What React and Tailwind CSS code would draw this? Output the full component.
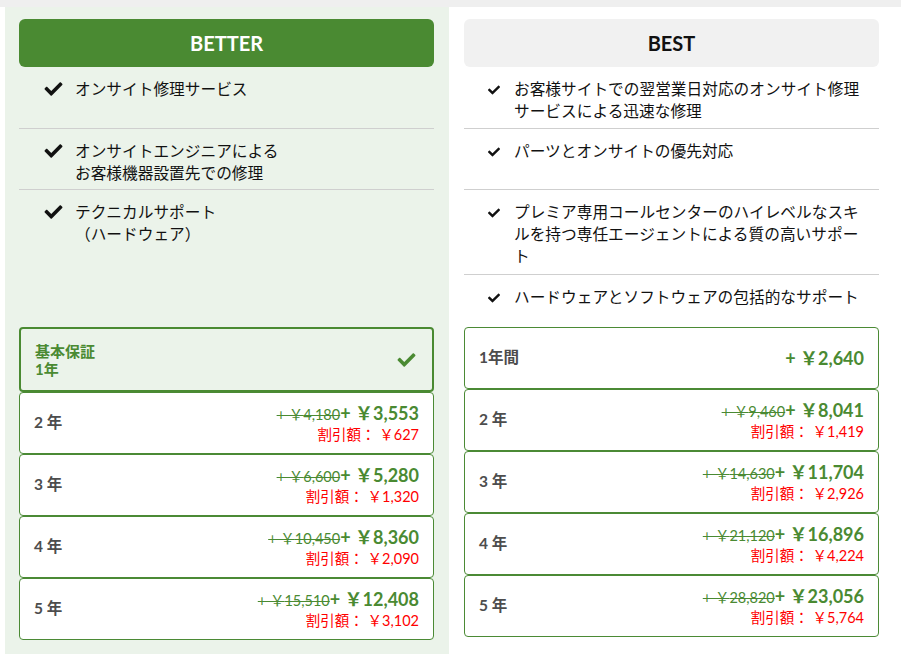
import { FaCheck } from 'react-icons/fa';

const font = { fontFamily: 'Lato, "Noto Sans CJK JP", sans-serif' };

const rowHeights = ['h-[62px]', 'h-[61px]', 'h-[85px]', 'h-[52px]'];

const betterFeatures = [
  ['オンサイト修理サービス'],
  ['オンサイトエンジニアによる', 'お客様機器設置先での修理'],
  ['テクニカルサポート', '（ハードウェア）'],
];

const bestFeatures = [
  ['お客様サイトでの翌営業日対応のオンサイト修理サービスによる迅速な修理'],
  ['パーツとオンサイトの優先対応'],
  ['プレミア専用コールセンターのハイレベルなスキルを持つ専任エージェントによる質の高いサポート'],
  ['ハードウェアとソフトウェアの包括的なサポート'],
];

const betterPrices = [
  { label: '2 年', was: '4,180', now: '3,553', off: '627' },
  { label: '3 年', was: '6,600', now: '5,280', off: '1,320' },
  { label: '4 年', was: '10,450', now: '8,360', off: '2,090' },
  { label: '5 年', was: '15,510', now: '12,408', off: '3,102' },
];

const bestPrices = [
  { label: '2 年', was: '9,460', now: '8,041', off: '1,419' },
  { label: '3 年', was: '14,630', now: '11,704', off: '2,926' },
  { label: '4 年', was: '21,120', now: '16,896', off: '4,224' },
  { label: '5 年', was: '28,820', now: '23,056', off: '5,764' },
];

function PriceRow({ row }) {
  return (
    <div className="h-[62px] bg-white border border-[#4b8a35] rounded-[4px] px-[14px] flex items-center justify-between">
      <span className="text-[15.5px] font-bold text-[#4d4d4d]">{row.label}</span>
      <div className="flex flex-col items-end">
        <div className="flex items-baseline text-[#4a8a32] leading-[21px]">
          <span className="text-[14.5px] line-through">+ ￥{row.was}</span>
          <span className="text-[18px] font-bold">+ ￥{row.now}</span>
        </div>
        <div className="text-[14.5px] text-[#ff0000] leading-[19px]">割引額： ￥{row.off}</div>
      </div>
    </div>
  );
}

export default function App() {
  return (
    <div className="min-h-screen bg-white" style={font}>
      <div className="h-[7px] bg-[#efefef]" />
      <div className="flex pl-[5px]">
        {/* BETTER */}
        <div className="w-[444px] bg-[#ebf3ea] pl-[14px] pr-[15px] pt-[12px] pb-[14px]">
          <div className="h-[48px] rounded-[6px] bg-[#4a8a32] flex items-center justify-center text-white text-[20px] font-bold">
            BETTER
          </div>
          <div className="h-[260px]">
            {betterFeatures.map((lines, i) => (
              <div
                key={i}
                className={`${rowHeights[i]} ${i < 2 ? 'border-b border-[#cfcfcf]' : ''} pt-[11px] flex`}
              >
                <FaCheck className="ml-[24px] mt-[2px] w-[21px] h-[18px] text-[#111]" />
                <div className="ml-[11px] text-[15.7px] leading-[22px] text-[#111]">
                  {lines.map((l) => (
                    <div key={l}>{l}</div>
                  ))}
                </div>
              </div>
            ))}
          </div>
          <div className="flex flex-col">
            <div className="h-[65px] border-2 border-[#4a8a32] rounded-[4px] px-[14px] flex items-center justify-between text-[#4a8a32]">
              <div className="text-[15px] font-bold leading-[18px]">
                <div>基本保証</div>
                <div>1年</div>
              </div>
              <FaCheck className="w-[21px] h-[18px] mr-[1px]" />
            </div>
            {betterPrices.map((row) => (
              <PriceRow key={row.label} row={row} />
            ))}
          </div>
        </div>

        {/* BEST */}
        <div className="w-[444px] bg-white pl-[15px] pr-[14px] pt-[12px]">
          <div className="h-[48px] rounded-[6px] bg-[#f1f1f1] flex items-center justify-center text-[#111] text-[20px] font-bold">
            BEST
          </div>
          <div className="h-[260px]">
            {bestFeatures.map((lines, i) => (
              <div
                key={i}
                className={`${rowHeights[i]} ${i < 3 ? 'border-b border-[#cfcfcf]' : ''} pt-[11px] flex`}
              >
                <FaCheck className="ml-[23px] mt-[6px] w-[14px] h-[12px] shrink-0 text-[#111]" />
                <div className="ml-[13px] w-[356px] text-[15.7px] leading-[22px] text-[#111]">
                  {lines.map((l) => (
                    <div key={l}>{l}</div>
                  ))}
                </div>
              </div>
            ))}
          </div>
          <div className="flex flex-col">
            <div className="h-[62px] bg-white border border-[#4b8a35] rounded-[4px] px-[14px] flex items-center justify-between">
              <span className="text-[15.5px] font-bold text-[#4d4d4d]">1年間</span>
              <span className="text-[18px] font-bold text-[#4a8a32]">+ ￥2,640</span>
            </div>
            {bestPrices.map((row) => (
              <PriceRow key={row.label} row={row} />
            ))}
          </div>
        </div>
      </div>
    </div>
  );
}
